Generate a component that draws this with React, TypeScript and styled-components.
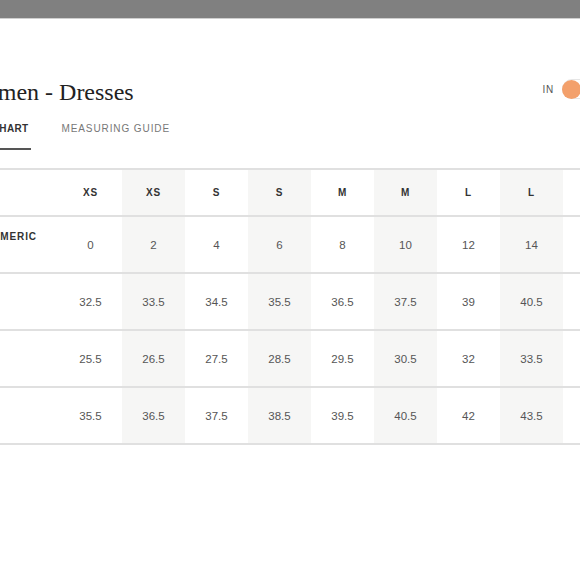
import React from "react";
import styled, { createGlobalStyle } from "styled-components";

const Global = createGlobalStyle`
  html, body { margin: 0; padding: 0; background: #fff; overflow: hidden; }
  body { width: 580px; height: 580px; }
`;

const TopBar = styled.div`
  height: 18px;
  background: #808080;
  border-bottom: 1px solid #cfcfcf;
`;

const Content = styled.div`
  width: 635px;
  margin-left: -35px;
  padding-top: 58px;
`;

const Header = styled.div`
  display: flex;
  align-items: center;
  justify-content: space-between;
`;

const Title = styled.h1`
  margin: 0;
  font-family: "Liberation Serif", serif;
  font-weight: 400;
  font-size: 24px;
  line-height: 30px;
  color: #222;
`;

const UnitToggle = styled.div`
  display: flex;
  align-items: center;
  gap: 8px;
  margin-bottom: 6px;
`;

const UnitLabel = styled.span`
  font-family: "Liberation Sans", sans-serif;
  font-size: 10px;
  letter-spacing: 0.8px;
  color: #555;
`;

const Track = styled.div`
  width: 38px;
  height: 20px;
  border-radius: 10px;
  border: 1px solid #e6e6e6;
  box-sizing: border-box;
  display: flex;
  align-items: center;
  background: #fff;
`;

const Knob = styled.div`
  width: 19px;
  height: 19px;
  border-radius: 50%;
  background: #f3a06b;
  margin-left: -1px;
`;

const Tabs = styled.div`
  display: flex;
  gap: 31px;
  margin-top: 16px;
`;

const Tab = styled.div<{ $active?: boolean }>`
  font-family: "Liberation Sans", sans-serif;
  font-size: 10px;
  line-height: 12px;
  letter-spacing: ${(p) => (p.$active ? "0.35px" : "0.9px")};
  font-weight: ${(p) => (p.$active ? 700 : 400)};
  color: ${(p) => (p.$active ? "#333" : "#777")};
  padding-bottom: 13px;
  padding-right: ${(p) => (p.$active ? "2px" : "0")};
  border-bottom: 2px solid ${(p) => (p.$active ? "#555" : "transparent")};
`;

const Table = styled.div`
  margin-top: 18px;
  border-top: 2px solid #e0e0e0;
`;

const Row = styled.div<{ $head?: boolean }>`
  display: grid;
  grid-template-columns: 94px repeat(8, 63px) 1fr;
  height: ${(p) => (p.$head ? "45px" : "55px")};
  border-bottom: 2px solid #e0e0e0;
`;

const LabelCell = styled.div`
  font-family: "Liberation Sans", sans-serif;
  font-size: 10px;
  font-weight: 700;
  letter-spacing: 0.9px;
  color: #333;
  padding: 14px 0 0 19px;
  line-height: 12px;
  white-space: nowrap;
`;

const Cell = styled.div<{ $shade?: boolean; $head?: boolean }>`
  display: flex;
  align-items: center;
  justify-content: center;
  background: ${(p) => (p.$shade ? "#f6f6f5" : "#fff")};
  font-family: "Liberation Sans", sans-serif;
  font-size: ${(p) => (p.$head ? "10px" : "11.5px")};
  font-weight: ${(p) => (p.$head ? 700 : 400)};
  letter-spacing: ${(p) => (p.$head ? "0.9px" : "0")};
  color: ${(p) => (p.$head ? "#333" : "#555")};
`;

const sizes = ["XS", "XS", "S", "S", "M", "M", "L", "L"];
const rows: { label: string; values: string[] }[] = [
  { label: "NUMERIC", values: ["0", "2", "4", "6", "8", "10", "12", "14"] },
  { label: "", values: ["32.5", "33.5", "34.5", "35.5", "36.5", "37.5", "39", "40.5"] },
  { label: "", values: ["25.5", "26.5", "27.5", "28.5", "29.5", "30.5", "32", "33.5"] },
  { label: "", values: ["35.5", "36.5", "37.5", "38.5", "39.5", "40.5", "42", "43.5"] },
];

export default function App() {
  return (
    <>
      <Global />
      <TopBar />
      <Content>
        <Header>
          <Title>Women - Dresses</Title>
          <UnitToggle>
            <UnitLabel>IN</UnitLabel>
            <Track>
              <Knob />
            </Track>
          </UnitToggle>
        </Header>
        <Tabs>
          <Tab $active>SIZE CHART</Tab>
          <Tab>MEASURING GUIDE</Tab>
        </Tabs>
        <Table>
          <Row $head>
            <LabelCell />
            {sizes.map((s, i) => (
              <Cell key={i} $head $shade={i % 2 === 1}>
                {s}
              </Cell>
            ))}
            <Cell />
          </Row>
          {rows.map((r, ri) => (
            <Row key={ri}>
              <LabelCell>{r.label}</LabelCell>
              {r.values.map((v, i) => (
                <Cell key={i} $shade={i % 2 === 1}>
                  {v}
                </Cell>
              ))}
              <Cell />
            </Row>
          ))}
        </Table>
      </Content>
    </>
  );
}
